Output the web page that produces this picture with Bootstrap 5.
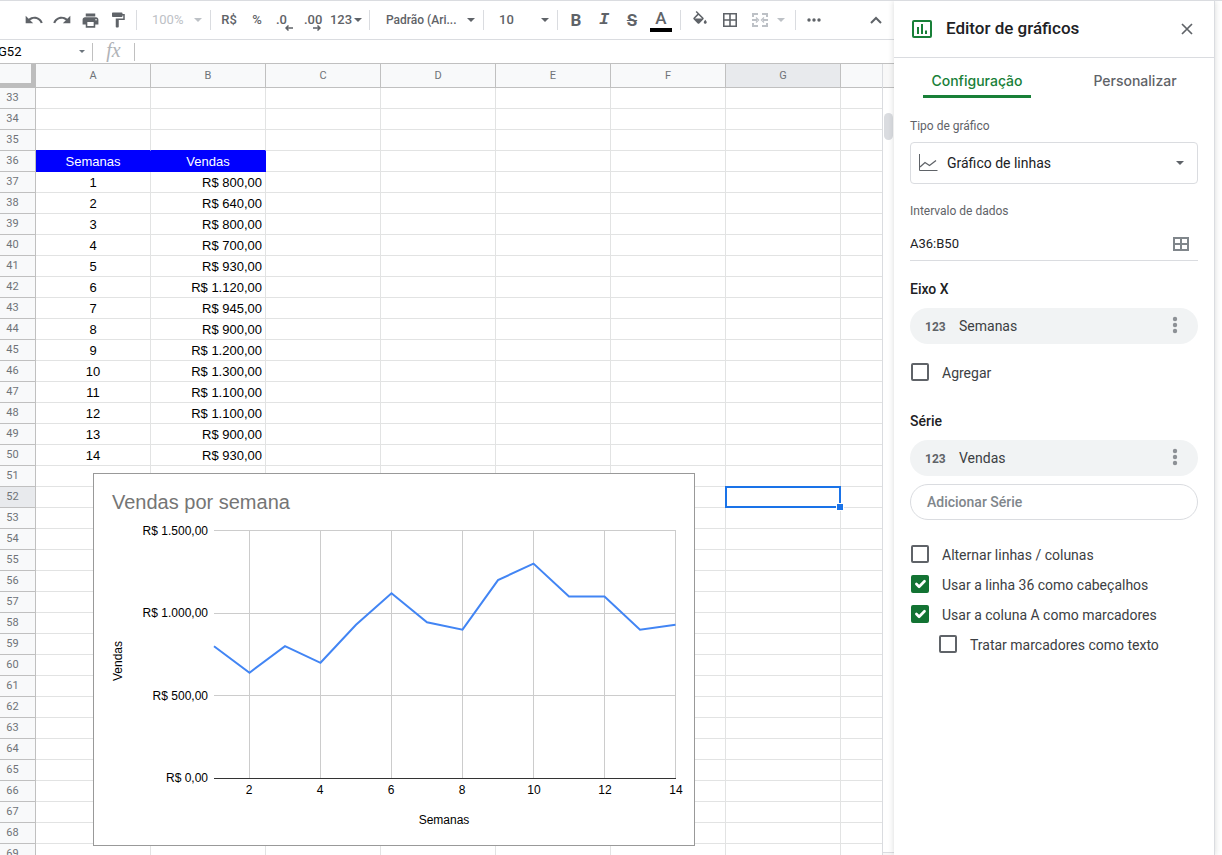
<!DOCTYPE html>
<html lang="pt-BR">
<head>
<meta charset="utf-8">
<meta name="viewport" content="width=device-width, initial-scale=1">
<title>Vendas por semana</title>
<link href="https://cdn.jsdelivr.net/npm/bootstrap@5.3.0/dist/css/bootstrap.min.css" rel="stylesheet">
<style>
  body { font-family: Roboto, sans-serif; font-size: 14px; color: #202124; border-top: 1px solid #dadce0; }
  svg { display: block; flex: none; }

  /* Toolbar */
  .toolbar { height: 39px; padding: 0 4px 0 20px; border-bottom: 1px solid #dadce0; color: #5f6368; }
  .tool { width: 28px; height: 28px; flex: none; padding: 0; border: 0; background: none; color: inherit; font-size: 13px; font-weight: 500; line-height: 20px; display: flex; align-items: center; justify-content: center; }
  .tool-off { color: #bdc1c6; }
  .tool-md { width: 30px; }
  .tool-menu { width: 65px; justify-content: space-between; padding: 0 4px 0 11px; }
  .tool-font { width: 105px; padding-left: 12px; font-size: 12px; }
  .tool-num { width: 38px; gap: 2px; }
  .tool-merge { width: 46px; gap: 9px; }
  .tool-letter { font-size: 17px; font-weight: 700; }
  .tool-italic { font-family: "Liberation Mono", monospace; font-style: italic; }
  .tool-color { width: 22px; border-bottom: 4px solid #000; font-size: 17px; font-weight: 500; line-height: 20px; }
  .decimal { flex-direction: column; align-items: flex-start; line-height: 10px; padding: 5px 0 0 5px; }
  .decimal svg { align-self: flex-end; margin-right: 6px; }
  .rule { width: 1px; height: 20px; margin: 0 4px; flex: none; background: #dadce0; }

  /* Formula bar and grid start under the left window edge */
  .sheet { margin-left: -10px; }
  .formula { height: 24px; border-bottom: 1px solid #c0c0c0; }
  .name-box { width: 76px; padding: 0 0 0 8px; border: 0; font-size: 13px; color: #000; background: none; }
  .name-caret { margin: 0 7px 0 13px; }
  .formula .rule { height: 18px; margin: 0; background: #c0c0c0; }
  .fx { width: 41px; text-align: center; font: italic 20px/20px "Liberation Serif", serif; color: #b0b3b7; padding-bottom: 3px; }
  .formula-input { border: 0; background: none; min-width: 0; }

  .grid { table-layout: fixed; width: 100%; border-collapse: separate; border-spacing: 0; font: 13px/18px "Liberation Sans", Arial, sans-serif; color: #000; }
  .grid th, .grid td { height: 21px; padding: 2px 3px 0; border: solid #e2e3e3; border-width: 0 1px 1px 0; text-align: center; font-weight: 400; white-space: nowrap; }
  .grid th { padding-top: 0; background: #f8f9fa; border-color: #c0c0c0; font: 11px/20px Roboto, sans-serif; color: #6f7378; vertical-align: top; }
  .grid thead th { height: 24px; line-height: 23px; }
  .grid thead .corner { border: solid #bdbdbd; border-width: 0 5px 5px 0; }
  .grid tr > :last-child { border-right: 0; }
  .grid .active-head { background: #e8eaed; }
  .grid td.money { text-align: right; }
  .grid td.title-cell { background: #00f; color: #fff; border-color: #00f; }
  .grid .above-title { border-bottom-color: #00f; }
  .active-cell { position: relative; }
  .cursor { position: absolute; inset: -1px; border: 2px solid #1a73e8; }
  .handle { position: absolute; right: -4px; bottom: -4px; width: 8px; height: 8px; background: #1a73e8; border: 1px solid #fff; }

  .scroller { width: 12px; flex: none; border-left: 1px solid #dadce0; }
  .scroll-head { height: 24px; background: #f8f8f8; border-bottom: 1px solid #c0c0c0; }
  .thumb { width: 9px; height: 27px; margin: 25px 1px 0; border-radius: 5px; background: #dadce0; }
  .scroll-foot { height: 3px; background: #f8f8f8; border-top: 1px solid #dadce0; }

  /* Chart floats over the cells */
  .chart { position: absolute; left: 103px; top: 409px; border: 1px solid #999; background: #fff; }
  .chart text { font: 12px "Liberation Sans", Arial, sans-serif; fill: #000; }
  .chart .chart-title { font-size: 20px; fill: #757575; }

  /* Chart editor */
  .editor { width: 321px; flex: none; border-right: 1px solid #dadce0; box-shadow: 0 0 6px rgba(60,64,67,.2); background: #fff; z-index: 2; }
  .gutter { width: 7px; flex: none; }
  .editor-head { height: 57px; padding: 0 21px 0 18px; border-bottom: 1px solid #dadce0; }
  .editor-head h1 { font-size: 17px; line-height: 24px; font-weight: 500; margin: 0 0 2px 14px; }
  .tabs { padding-left: 4px; height: 40px; }
  .tab { border: 0; background: none; padding: 6px 8px 0; height: 40px; color: #5f6368; font: 500 14px/34px Inter, sans-serif; border-bottom: 3px solid transparent; border-radius: 3px 3px 0 0; }
  .tab-on { color: #188038; border-bottom-color: #188038; }
  .editor-body { padding: 20px 16px; }
  .field-label { font-size: 12px; line-height: 16px; color: #5f6368; display: block; }
  .type-box { height: 42px; padding: 0 13px 0 8px; margin: 8px 0 19px; border: 1px solid #dadce0; border-radius: 4px; gap: 9px; }
  .type-box select { appearance: none; border: 0; background: none; font-size: 14px; padding: 0; color: #202124; min-width: 0; }
  .range-box { height: 34px; margin: 8px 0 18px; padding-right: 9px; border-bottom: 1px solid #dadce0; }
  .range-box input { border: 0; padding: 0; font-size: 13px; color: #202124; min-width: 0; }
  .editor h2 { font-size: 14px; line-height: 20px; font-weight: 500; margin: 0 0 9px; }
  .chip { height: 36px; padding: 0 12px 0 15px; border-radius: 18px; background: #f1f3f4; color: #3c4043; }
  .chip .kind { width: 34px; font-size: 12px; font-weight: 700; color: #5f6368; padding-top: 2px; }
  .dots { border: 0; background: none; padding: 0; }
  .chip .dots { padding: 0 8px 2px; }
  .add-series { height: 36px; width: 100%; margin: 8px 0 19px; padding: 1px 16px 0; border: 1px solid #dadce0; border-radius: 18px; background: #fff; color: #80868b; font-weight: 500; text-align: left; }
  .tick { min-height: 30px; gap: 13px; padding-left: 1px; color: #3c4043; }
  .tick .form-check-input { width: 18px; height: 18px; margin: 0; border: 2px solid #5f6368; border-radius: 2px; flex: none; }
  .tick .form-check-input:checked { background-color: #137333; border-color: #137333; background-size: 18px; }
  .tick label { line-height: 20px; padding-top: 1px; }
  .tick-sub { margin-left: 28px; }
  .aggregate { margin: 13px 0 24px; }
</style>
</head>
<body class="vh-100 overflow-hidden d-flex">

<svg class="d-none">
  <symbol id="caret" viewBox="0 0 8 4"><path d="M0 0h8L4 4z" fill="currentColor"/></symbol>
  <symbol id="cells" viewBox="3 3 18 18"><path fill="currentColor" d="M3 3v18h18V3H3zm8 16H5v-6h6v6zm0-8H5V5h6v6zm8 8h-6v-6h6v6zm0-8h-6V5h6v6z"/></symbol>
</svg>

<main class="flex-fill d-flex flex-column overflow-hidden">
  <div class="toolbar d-flex align-items-center flex-shrink-0" role="toolbar">
    <button class="tool" aria-label="Desfazer"><svg width="20" height="20" viewBox="0 0 24 24" fill="currentColor"><path d="M12.500 8c-2.650 0-5.050.990-6.900 2.600L2 7v9h9l-3.620-3.620c1.390-1.160 3.160-1.880 5.120-1.880 3.540 0 6.550 2.310 7.600 5.500l2.370-.780C21.080 11.030 17.150 8 12.500 8z"/></svg></button>
    <button class="tool" aria-label="Refazer"><svg width="20" height="20" viewBox="0 0 24 24" fill="currentColor"><path d="M18.400 10.600C16.550 8.990 14.150 8 11.500 8c-4.650 0-8.580 3.030-9.960 7.220L3.900 16c1.050-3.190 4.050-5.500 7.600-5.500 1.950 0 3.730.720 5.120 1.880L13 16h9V7l-3.600 3.600z"/></svg></button>
    <button class="tool" aria-label="Imprimir"><svg width="19" height="19" viewBox="0 0 24 24" fill="currentColor"><path d="M19 8H5c-1.660 0-3 1.340-3 3v6h4v4h12v-4h4v-6c0-1.660-1.340-3-3-3zm-3 11H8v-5h8v5zm3-7c-.550 0-1-.450-1-1s.450-1 1-1 1 .450 1 1-.450 1-1 1zm-1-9H6v4h12V3z"/></svg></button>
    <button class="tool" aria-label="Pintar formatação"><svg width="18" height="18" viewBox="0 0 24 24" fill="currentColor"><path d="M18 4V3c0-.550-.450-1-1-1H5c-.550 0-1 .450-1 1v4c0 .550.450 1 1 1h12c.550 0 1-.450 1-1V6h1v4H9v11c0 .550.450 1 1 1h2c.550 0 1-.450 1-1v-9h8V4h-3z"/></svg></button>
    <span class="rule"></span>
    <button class="tool tool-menu tool-off fw-normal">100%<svg width="8" height="4"><use href="#caret"/></svg></button>
    <span class="rule"></span>
    <button class="tool">R$</button>
    <button class="tool">%</button>
    <button class="tool decimal" aria-label="Diminuir casas decimais">.0<svg width="8" height="6" viewBox="0 0 8 6" fill="none" stroke="currentColor" stroke-width="1.500"><path d="M8 3H1M3.500.5L1 3l2.500 2.500"/></svg></button>
    <button class="tool decimal" aria-label="Aumentar casas decimais">.00<svg width="8" height="6" viewBox="0 0 8 6" fill="none" stroke="currentColor" stroke-width="1.500"><path d="M0 3h7M4.500.5L7 3 4.500 5.500"/></svg></button>
    <button class="tool tool-num">123<svg width="8" height="4"><use href="#caret"/></svg></button>
    <span class="rule"></span>
    <button class="tool tool-menu tool-font">Padrão (Ari...<svg width="8" height="4"><use href="#caret"/></svg></button>
    <span class="rule"></span>
    <button class="tool tool-menu">10<svg width="8" height="4"><use href="#caret"/></svg></button>
    <span class="rule"></span>
    <button class="tool tool-letter">B</button>
    <button class="tool tool-letter tool-italic">I</button>
    <button class="tool tool-letter"><s>S</s></button>
    <button class="tool tool-md"><span class="tool-color">A</span></button>
    <span class="rule"></span>
    <button class="tool tool-md" aria-label="Cor de preenchimento"><svg width="18" height="18" viewBox="0 0 24 24" fill="currentColor"><path d="M16.560 8.940L7.620 0 6.210 1.410l2.380 2.380-5.150 5.150c-.590.590-.590 1.540 0 2.120l5.500 5.500c.290.290.680.440 1.060.440s.770-.150 1.060-.440l5.500-5.500c.590-.580.590-1.530 0-2.120zM5.210 10L10 5.210 14.790 10H5.210zM19 11.500s-2 2.170-2 3.500c0 1.100.9 2 2 2s2-.9 2-2c0-1.330-2-3.500-2-3.500z"/></svg></button>
    <button class="tool tool-md" aria-label="Bordas"><svg width="14" height="14"><use href="#cells"/></svg></button>
    <button class="tool tool-merge tool-off" aria-label="Mesclar células"><svg width="16" height="14" viewBox="0 0 16 14" fill="none" stroke="currentColor" stroke-width="2"><path d="M1 4V1h5M10 1h5v3M1 10v3h5M10 13h5v-3M0 7h5M16 7h-5"/><path d="M4 4.500L6.500 7 4 9.500M12 4.500L9.500 7 12 9.500" stroke-width="1.300"/></svg><svg width="8" height="4"><use href="#caret"/></svg></button>
    <span class="rule"></span>
    <button class="tool" aria-label="Mais"><svg width="14" height="4" viewBox="0 0 14 4" fill="currentColor"><circle cx="2" cy="2" r="1.700"/><circle cx="7" cy="2" r="1.700"/><circle cx="12" cy="2" r="1.700"/></svg></button>
    <button class="tool ms-auto" aria-label="Ocultar menus"><svg width="12" height="8" viewBox="0 0 12 8" fill="none" stroke="currentColor" stroke-width="2"><path d="M1 7l5-5 5 5"/></svg></button>
  </div>

  <div class="sheet flex-fill d-flex flex-column overflow-hidden">
    <div class="formula d-flex align-items-center flex-shrink-0">
      <input class="name-box" value="G52" aria-label="Caixa de nome">
      <svg width="6" height="3" class="name-caret text-secondary"><use href="#caret"/></svg>
      <span class="rule"></span>
      <span class="fx">fx</span>
      <span class="rule"></span>
      <input class="formula-input flex-fill" aria-label="Fórmula">
    </div>
    <div class="flex-fill d-flex overflow-hidden position-relative">
      <div class="flex-fill overflow-hidden">
        <table class="grid">
          <colgroup id="cols"></colgroup>
          <thead><tr id="letters"></tr></thead>
          <tbody id="rows"></tbody>
        </table>
      </div>
      <div class="scroller d-flex flex-column"><div class="scroll-head"></div><div class="thumb"></div><div class="scroll-foot mt-auto"></div></div>

      <figure class="chart m-0">
        <svg width="600" height="371" viewBox="0 0 600 371" role="img" aria-label="Vendas por semana">
          <text class="chart-title" x="18" y="35">Vendas por semana</text>
          <path d="M120 56.500h462M120 139.500h462M120 221.500h462M155.500 56v248M226.500 56v248M297.500 56v248M368.500 56v248M439.500 56v248M510.500 56v248M581.500 56v248" stroke="#ccc"/>
          <path d="M120 304.500h462" stroke="#333"/>
          <polyline fill="none" stroke="#4285f4" stroke-width="2" points="120,172.200 155.500,198.700 191,172.200 226.500,188.800 262,150.700 297.500,119.300 333,148.300 368.500,155.700 404,106.100 439.500,89.600 475,122.600 510.500,122.600 546,155.700 581.500,150.700"/>
          <g text-anchor="end">
            <text x="114" y="61">R$ 1.500,00</text><text x="114" y="143">R$ 1.000,00</text>
            <text x="114" y="226">R$ 500,00</text><text x="114" y="308">R$ 0,00</text>
          </g>
          <g text-anchor="middle">
            <text x="155" y="320">2</text><text x="226" y="320">4</text><text x="297" y="320">6</text><text x="368" y="320">8</text>
            <text x="440" y="320">10</text><text x="511" y="320">12</text><text x="582" y="320">14</text>
            <text x="350" y="350">Semanas</text>
            <text transform="translate(28 187) rotate(-90)">Vendas</text>
          </g>
        </svg>
      </figure>
    </div>
  </div>
</main>

<aside class="editor d-flex flex-column">
  <header class="editor-head d-flex align-items-center">
    <svg width="20" height="18" viewBox="0 0 20 18" fill="none" stroke="#188038" stroke-width="2"><rect x="1" y="1" width="18" height="16" rx="1"/><path d="M6 7v7M10 4v10M14 10.500V14"/></svg>
    <h1>Editor de gráficos</h1>
    <button class="dots ms-auto" aria-label="Fechar"><svg width="12" height="12" viewBox="0 0 12 12" fill="none" stroke="#5f6368" stroke-width="1.700"><path d="M1 1l10 10M11 1L1 11"/></svg></button>
  </header>
  <nav class="tabs d-flex" role="tablist">
    <div class="flex-fill w-50 text-center"><button class="tab tab-on" role="tab" aria-selected="true">Configuração</button></div>
    <div class="flex-fill w-50 text-center"><button class="tab" role="tab" aria-selected="false">Personalizar</button></div>
  </nav>
  <div class="editor-body">
    <label class="field-label" for="type">Tipo de gráfico</label>
    <div class="type-box d-flex align-items-center">
      <svg width="19" height="18" viewBox="0 0 19 18" fill="none" stroke="#5f6368"><path d="M.5 0v16.500h18"/><path d="M1 13l5-4.500 4.500 3 6.500-5" stroke-width="1.300"/></svg>
      <select id="type" class="flex-fill"><option>Gráfico de linhas</option></select>
      <svg width="8" height="4" color="#5f6368"><use href="#caret"/></svg>
    </div>
    <label class="field-label" for="range">Intervalo de dados</label>
    <div class="range-box d-flex align-items-center">
      <input id="range" class="flex-fill" value="A36:B50">
      <button class="dots" aria-label="Selecionar intervalo"><svg width="16" height="14" viewBox="0 0 16 14" fill="none" stroke="#80868b" stroke-width="2"><path d="M1 1h14v12H1zM8 1v12M1 7h14"/></svg></button>
    </div>

    <h2>Eixo X</h2>
    <div class="chip d-flex align-items-center">
      <span class="kind">123</span><span>Semanas</span>
      <button class="dots ms-auto" aria-label="Opções de Semanas"><svg width="6" height="18" viewBox="0 0 6 18" fill="#8d9196"><circle cx="3" cy="3" r="2.200"/><circle cx="3" cy="9" r="2.200"/><circle cx="3" cy="15" r="2.200"/></svg></button>
    </div>
    <div class="tick aggregate d-flex align-items-center"><input class="form-check-input" type="checkbox" id="agg"><label for="agg">Agregar</label></div>

    <h2>Série</h2>
    <div class="chip d-flex align-items-center">
      <span class="kind">123</span><span>Vendas</span>
      <button class="dots ms-auto" aria-label="Opções de Vendas"><svg width="6" height="18" viewBox="0 0 6 18" fill="#8d9196"><circle cx="3" cy="3" r="2.200"/><circle cx="3" cy="9" r="2.200"/><circle cx="3" cy="15" r="2.200"/></svg></button>
    </div>
    <button class="add-series">Adicionar Série</button>

    <div class="tick d-flex align-items-center"><input class="form-check-input" type="checkbox" id="swap"><label for="swap">Alternar linhas / colunas</label></div>
    <div class="tick d-flex align-items-center"><input class="form-check-input" type="checkbox" id="head" checked><label for="head">Usar a linha 36 como cabeçalhos</label></div>
    <div class="tick d-flex align-items-center"><input class="form-check-input" type="checkbox" id="marks" checked><label for="marks">Usar a coluna A como marcadores</label></div>
    <div class="tick tick-sub d-flex align-items-center"><input class="form-check-input" type="checkbox" id="astext"><label for="astext">Tratar marcadores como texto</label></div>
  </div>
</aside>
<div class="gutter"></div>

<script src="https://cdn.jsdelivr.net/npm/bootstrap@5.3.0/dist/js/bootstrap.bundle.min.js"></script>
<script>
  const letters = ['A', 'B', 'C', 'D', 'E', 'F', 'G'];
  const sales = ['800,00', '640,00', '800,00', '700,00', '930,00', '1.120,00', '945,00', '900,00',
                 '1.200,00', '1.300,00', '1.100,00', '1.100,00', '900,00', '930,00'];

  document.getElementById('cols').innerHTML =
    '<col style="width:46px">' + letters.map(() => '<col style="width:115px">').join('') + '<col>';
  document.getElementById('letters').innerHTML = '<th class="corner"></th>' +
    letters.map(l => `<th${l === 'G' ? ' class="active-head"' : ''}>${l}</th>`).join('') + '<th></th>';

  let html = '';
  for (let r = 33; r <= 69; r++) {
    html += `<tr><th${r === 52 ? ' class="active-head"' : ''}>${r}</th>`;
    if (r === 36) html += '<td class="title-cell">Semanas</td><td class="title-cell">Vendas</td>';
    else if (r > 36 && r <= 50) html += `<td>${r - 36}</td><td class="money">R$ ${sales[r - 37]}</td>`;
    else html += r === 35 ? '<td class="above-title"></td><td class="above-title"></td>' : '<td></td><td></td>';
    html += '<td></td><td></td><td></td><td></td>';
    html += r === 52 ? '<td class="active-cell"><span class="cursor"></span><span class="handle"></span></td>' : '<td></td>';
    html += '<td></td></tr>';
  }
  document.getElementById('rows').innerHTML = html;
</script>
</body>
</html>
